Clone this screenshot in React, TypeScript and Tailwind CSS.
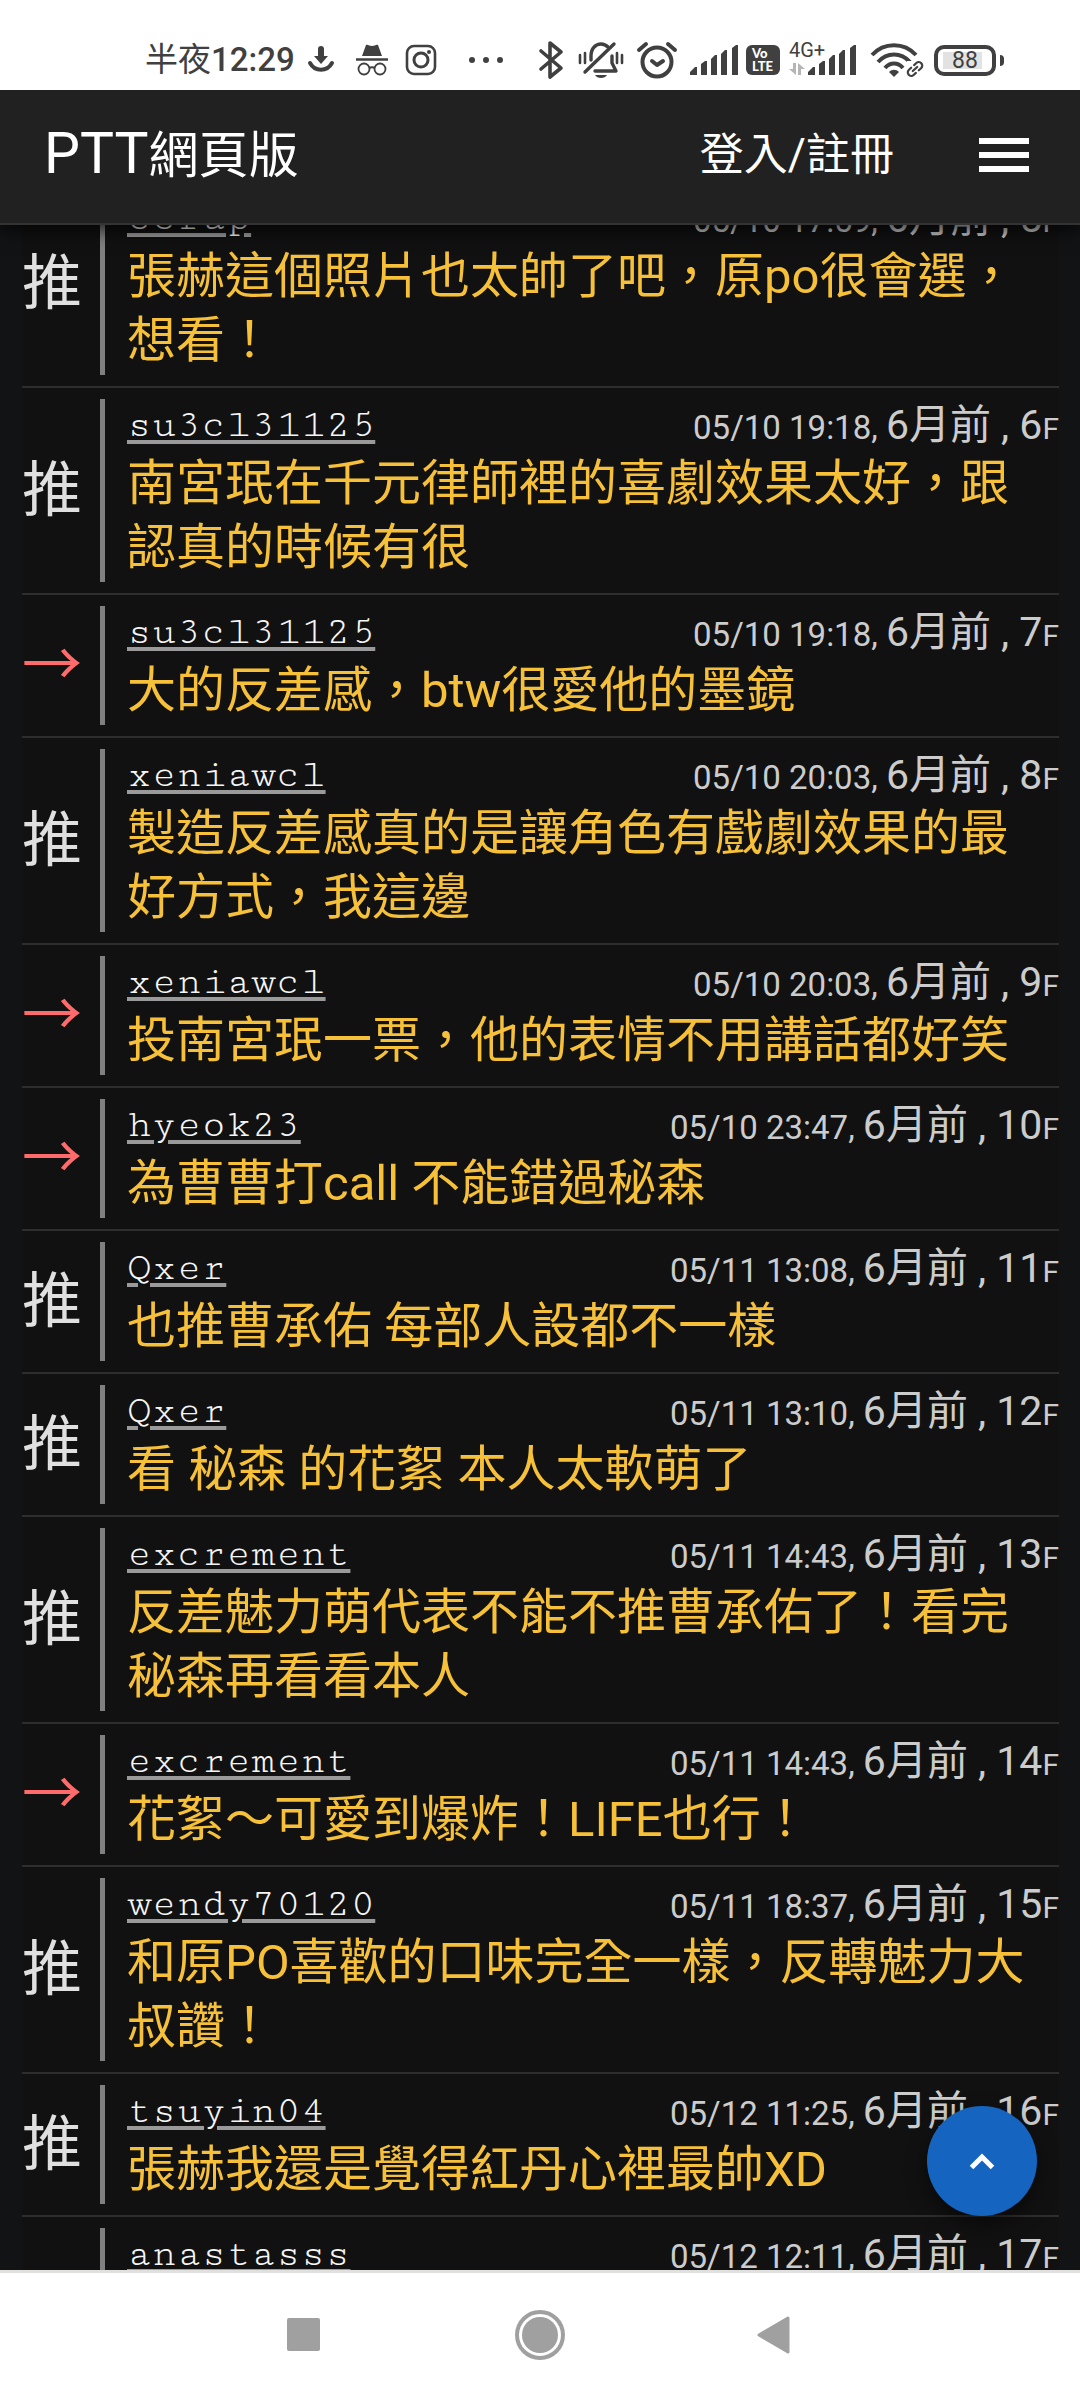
import React from "react";
import clsx from "clsx";

type Push = {
  tag: "推" | "→";
  user: string;
  time: string;
  floor: number;
  text?: string;
};

const pushes: Push[] = [
  { tag: "推", user: "ccrap", time: "05/10 17:59", floor: 5, text: "張赫這個照片也太帥了吧，原po很會選，想看！" },
  { tag: "推", user: "su3cl31125", time: "05/10 19:18", floor: 6, text: "南宮珉在千元律師裡的喜劇效果太好，跟認真的時候有很" },
  { tag: "→", user: "su3cl31125", time: "05/10 19:18", floor: 7, text: "大的反差感，btw很愛他的墨鏡" },
  { tag: "推", user: "xeniawcl", time: "05/10 20:03", floor: 8, text: "製造反差感真的是讓角色有戲劇效果的最好方式，我這邊" },
  { tag: "→", user: "xeniawcl", time: "05/10 20:03", floor: 9, text: "投南宮珉一票，他的表情不用講話都好笑" },
  { tag: "→", user: "hyeok23", time: "05/10 23:47", floor: 10, text: "為曹曹打call 不能錯過秘森" },
  { tag: "推", user: "Qxer", time: "05/11 13:08", floor: 11, text: "也推曹承佑 每部人設都不一樣" },
  { tag: "推", user: "Qxer", time: "05/11 13:10", floor: 12, text: "看 秘森 的花絮 本人太軟萌了" },
  { tag: "推", user: "excrement", time: "05/11 14:43", floor: 13, text: "反差魅力萌代表不能不推曹承佑了！看完秘森再看看本人" },
  { tag: "→", user: "excrement", time: "05/11 14:43", floor: 14, text: "花絮～可愛到爆炸！LIFE也行！" },
  { tag: "推", user: "wendy70120", time: "05/11 18:37", floor: 15, text: "和原PO喜歡的口味完全一樣，反轉魅力大叔讚！" },
  { tag: "推", user: "tsuyin04", time: "05/12 11:25", floor: 16, text: "張赫我還是覺得紅丹心裡最帥XD" },
  { tag: "推", user: "anastasss", time: "05/12 12:11", floor: 17 },
];

function SignalIcon() {
  return (
    <svg width="48" height="32" viewBox="0 0 48 32" fill="currentColor">
      <path d="M0 31v-3l5-5h2v8zM11 31V20l4-3h2v14zM21 31V15l4-4h2v20zM31 31V10l4-4h2v25zM42 31V4l4-3h2v30z" />
    </svg>
  );
}

function StatusBar() {
  return (
    <div className="relative z-20 flex h-[90px] shrink-0 items-center justify-between bg-white pt-[30px] pr-[76px] pl-[145px] text-[#404040]">
      <div className="flex h-[60px] items-center">
        <span className="text-[33px] leading-[60px] font-medium">
          <span className="font-normal">半夜</span>12:29
        </span>
        <svg className="ml-3" width="28" height="28" viewBox="0 0 28 28" fill="none" stroke="currentColor">
          <path d="M14 3v8" strokeWidth="6" strokeLinecap="round" />
          <path d="M7 10h14l-7 8z" fill="currentColor" stroke="none" />
          <path d="M3 17c5 9 17 9 22 0" strokeWidth="4" strokeLinecap="round" />
        </svg>
        <svg className="ml-5" width="34" height="32" viewBox="0 0 34 32" fill="none" stroke="currentColor">
          <path d="M11 1c2-1 3 1 6 1s4-2 6-1l4 11H7z" fill="currentColor" stroke="none" />
          <path d="M1 15.500h32" strokeWidth="2.500" />
          <circle cx="9" cy="25" r="5.500" strokeWidth="1.800" />
          <circle cx="25" cy="25" r="5.500" strokeWidth="1.800" />
          <path d="M14 24c2-1 4-1 6 0" strokeWidth="2" />
        </svg>
        <svg className="ml-4" width="32" height="32" viewBox="0 0 32 32" fill="none" stroke="currentColor">
          <rect x="2" y="2" width="28" height="28" rx="7" strokeWidth="2.600" />
          <circle cx="16" cy="16" r="7" strokeWidth="3" />
          <circle cx="24" cy="8" r="2" fill="currentColor" stroke="none" />
        </svg>
        <svg className="ml-[31px]" width="36" height="8" viewBox="0 0 36 8" fill="currentColor">
          <circle cx="4" cy="4" r="3" />
          <circle cx="18" cy="4" r="3" />
          <circle cx="32" cy="4" r="3" />
        </svg>
      </div>
      <div className="flex h-[60px] items-center">
        <svg width="26" height="40" viewBox="0 0 26 40" fill="none" stroke="currentColor" strokeWidth="3.600" strokeLinecap="round" strokeLinejoin="round">
          <path d="M3 11l20 17-11 9V3l11 9L3 29" />
        </svg>
        <svg className="ml-3.5" width="46" height="38" viewBox="0 0 46 38" fill="none" stroke="currentColor" strokeWidth="3.400" strokeLinecap="round">
          <path d="M13 19v-4c0-8 5-12 10-12 3 0 5 1 7 3M34 15v7l4 8H17" strokeLinejoin="round" />
          <path d="M36 3L7 31" />
          <path d="M2 14v8M7 12v10M39 12v10M44 14v8" strokeWidth="2.600" />
          <path d="M17 34h12c-2 4-10 4-12 0z" fill="currentColor" stroke="none" />
        </svg>
        <svg className="ml-3" width="42" height="38" viewBox="0 0 42 38" fill="none" stroke="currentColor" strokeWidth="4" strokeLinecap="round">
          <circle cx="21" cy="21" r="14.500" />
          <path d="M16 20l5 4 6-4M3 9l7-6M39 9l-7-6" strokeLinejoin="round" />
        </svg>
        <span className="ml-3">
          <SignalIcon />
        </span>
        <span className="ml-2 flex h-[30px] w-[34px] flex-col rounded-md bg-[#404040] pt-0.5 pl-1.5 font-['Lato','Roboto',sans-serif] text-[13px] leading-[13px] font-black text-white">
          <span>Vo</span>
          <span>LTE</span>
        </span>
        <span className="relative ml-7">
          <span className="absolute -top-1.5 -left-[19px] text-[20px] leading-6">4G+</span>
          <svg className="absolute top-[19px] -left-[19px]" width="16" height="12" viewBox="0 0 16 12" fill="#b5b5b5">
            <path d="M4 0h3v12L0 6h4zM9 12V0l7 6h-4v6z" />
          </svg>
          <SignalIcon />
        </span>
        <svg className="ml-3.5" width="54" height="36" viewBox="0 0 54 36" fill="none" stroke="currentColor" strokeWidth="4">
          <path d="M2 13c12-13 32-13 44 0M8 20c9-10 23-10 32 0M15 26c5-6 13-6 18 0" />
          <path d="M19 30c3-3 7-3 10 0l-5 5z" fill="currentColor" stroke="none" />
          <path d="M37 19h16v16H37z" fill="#fff" stroke="none" />
          <g strokeWidth="2.200" strokeLinecap="round" transform="rotate(-42 45 27)">
            <path d="M43 23.500h-3a3.500 3.500 0 0 0 0 7h3M47 23.500h3a3.500 3.500 0 0 1 0 7h-3M42 27h6" />
          </g>
        </svg>
        <span className="ml-2.5 flex h-[31px] w-[62px] items-center justify-center rounded-[10px] border-4 border-[#404040]">
          <span className="h-[17px] w-11 bg-[linear-gradient(90deg,#e2e2e2_88%,#fff_88%)] text-center text-[23px] leading-[17px]">
            88
          </span>
        </span>
        <span className="ml-1 h-[11px] w-1 rounded-r-sm bg-[#404040]" />
      </div>
    </div>
  );
}

function Header() {
  return (
    <header className="relative z-10 flex h-[135px] shrink-0 items-center justify-between border-b-2 border-[#333] bg-[#212121] pr-[51px] pb-1 pl-11 text-white shadow-[0_6px_16px_rgba(0,0,0,0.7)]">
      <a href="#" className="text-[50px] leading-[64px]">
        <span className="text-[57px]">PTT</span>網頁版
      </a>
      <div className="flex items-center gap-[85px]">
        <a href="#" className="text-[44px] leading-[64px]">
          登入/註冊
        </a>
        <button type="button" aria-label="選單" className="flex flex-col gap-2">
          <span className="h-1.5 w-[50px] bg-white" />
          <span className="h-1.5 w-[50px] bg-white" />
          <span className="h-1.5 w-[50px] bg-white" />
        </button>
      </div>
    </header>
  );
}

function PushRow({ tag, user, time, floor, text }: Push) {
  return (
    <li className="flex border-b-2 border-[#2e2e2e] py-[11px]">
      <div
        className={clsx(
          "flex w-[78px] shrink-0 items-center pb-3 font-['Noto_Sans_CJK_TC',sans-serif] text-[60px] leading-[64px]",
          tag === "推" ? "text-[#e0e0e0]" : "text-[#ff6b6b]"
        )}
      >
        {tag}
      </div>
      <div className="min-w-0 flex-1 border-l-[5px] border-[#808080] pb-0.5 pl-[22px]">
        <div className="flex h-[53px] items-start justify-between leading-[52px] whitespace-nowrap">
          <a
            href="#"
            className="font-['Cutive_Mono','Liberation_Mono',monospace] text-[41px] text-[#f5f5f5] underline decoration-[#9a9a9a] decoration-4 underline-offset-4"
          >
            {user}
          </a>
          <span className="text-[41px] text-[#ccc]">
            <span className="text-[33px]">{time}, </span>6月前 , {floor}
            <span className="text-[30px]">F</span>
          </span>
        </div>
        {text ? (
          <p className="pr-4 text-[49px] leading-[64px] text-[#f6c038]">{text}</p>
        ) : (
          <div className="h-32" />
        )}
      </div>
    </li>
  );
}

function NavBar() {
  return (
    <nav className="flex h-[130px] shrink-0 items-center justify-center gap-[186px] border-t-[3px] border-[#e0e0de] bg-white pb-1 text-[#a0a0a0]">
      <button type="button" aria-label="最近使用">
        <svg width="50" height="50" viewBox="0 0 50 50" fill="currentColor">
          <rect x="8" y="8" width="33" height="33" rx="2" />
        </svg>
      </button>
      <button type="button" aria-label="主畫面">
        <svg width="50" height="50" viewBox="0 0 50 50" fill="currentColor">
          <circle cx="25" cy="25" r="23" fill="none" stroke="currentColor" strokeWidth="4" />
          <circle cx="25" cy="25" r="18" />
        </svg>
      </button>
      <button type="button" aria-label="返回">
        <svg width="50" height="50" viewBox="0 0 50 50" fill="currentColor" stroke="currentColor" strokeWidth="3" strokeLinejoin="round">
          <path d="M8 25L37 8v34z" />
        </svg>
      </button>
    </nav>
  );
}

export default function App() {
  return (
    <div className="flex h-screen flex-col bg-[#111315] font-['Roboto','Noto_Sans_CJK_TC',sans-serif]">
      <StatusBar />
      <Header />
      <main className="relative min-h-0 flex-1 overflow-hidden pr-[21px] pl-[22px]">
        <ul className="-mt-11 bg-[#111]">
          {pushes.map((push) => (
            <PushRow key={push.floor} {...push} />
          ))}
        </ul>
        <button
          type="button"
          aria-label="回到頂部"
          className="absolute right-[43px] bottom-[54px] flex size-[110px] items-center justify-center rounded-full bg-[#1565c0] text-white shadow-[0_8px_20px_rgba(0,0,0,0.5)]"
        >
          <svg width="26" height="18" viewBox="0 0 26 18" fill="none" stroke="currentColor" strokeWidth="5">
            <path d="M2.500 15.500L13 5l10.500 10.500" />
          </svg>
        </button>
      </main>
      <NavBar />
    </div>
  );
}
